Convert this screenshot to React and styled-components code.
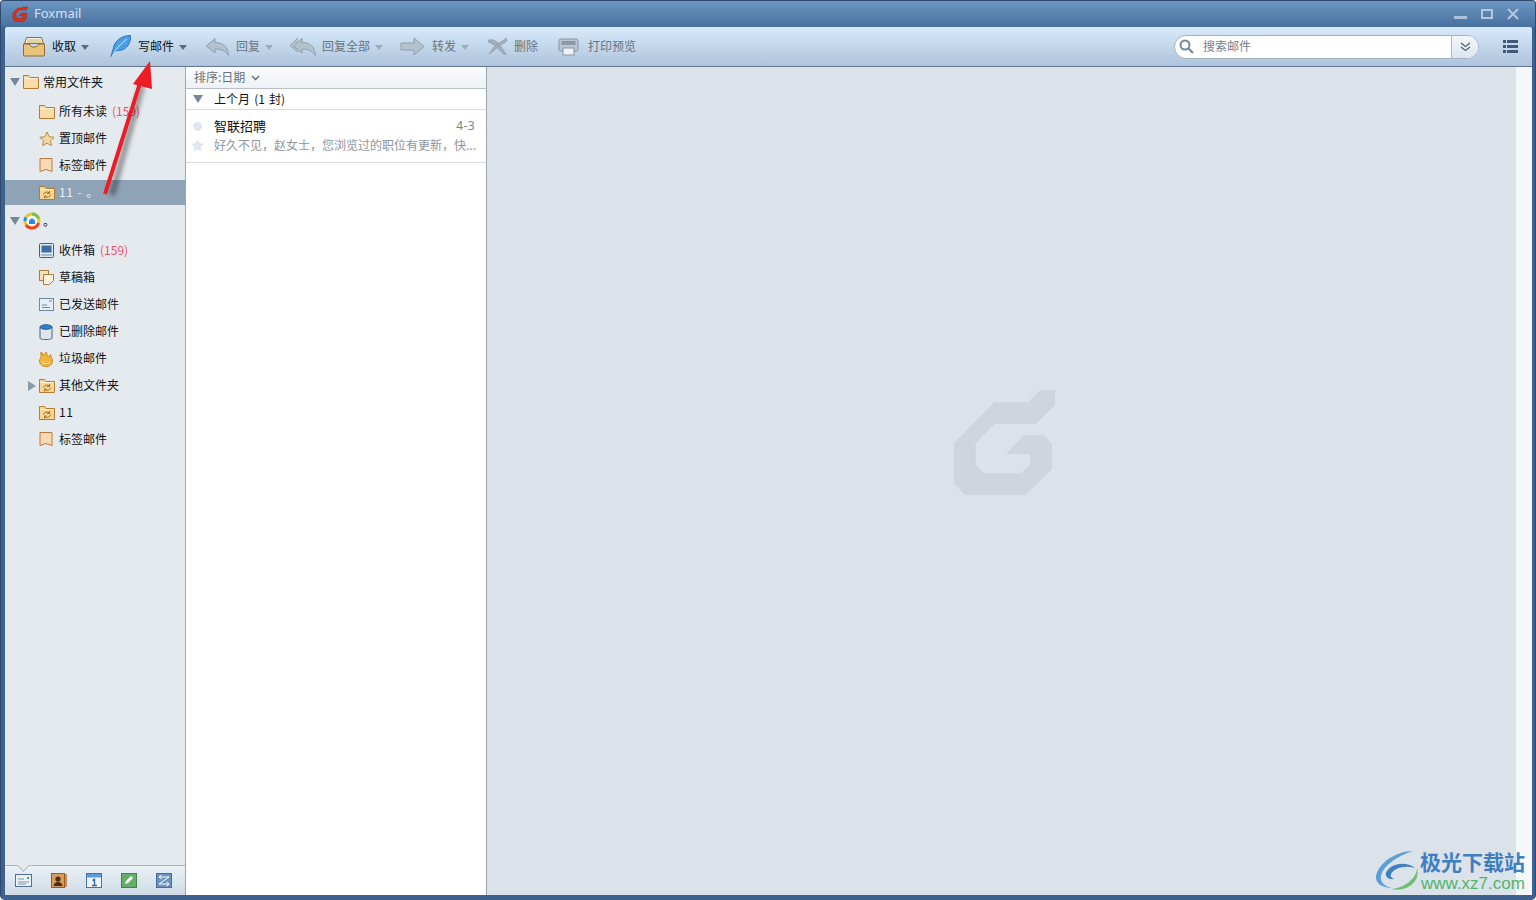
import React from "react";
import styled, { createGlobalStyle } from "styled-components";

const Global = createGlobalStyle`
  html, body { margin: 0; padding: 0; background: #fff; }
  body { font-family: "Noto Sans CJK SC", "Noto Sans", sans-serif; font-size: 12px; overflow: hidden; }
  * { box-sizing: border-box; }
`;

const Frame = styled.div`
  position: relative; width: 1536px; height: 900px;
  display: flex; flex-direction: column;
  background: #3d628f;
  border: 1px solid #2f4a6e; border-bottom: 0;
  border-radius: 4px 4px 5px 5px;
  padding: 0 3px 5px 3px; overflow: hidden;
`;
const TitleBar = styled.div`
  height: 26px; margin: 0 -3px; padding: 0 12px 0 11px; flex: none;
  display: flex; align-items: center;
  background: linear-gradient(#6c97c2, #48709e);
`;
const TitleText = styled.span`
  font: 13px "Noto Sans", sans-serif; color: #d5e2ef; margin-left: 5px; flex: 1; line-height: 1;
  margin-top: -2px;
`;
const WinControls = styled.div`display: flex; align-items: center; gap: 14px; margin-right: 4px;`;
const Toolbar = styled.div`
  height: 40px; flex: none; display: flex; align-items: center; padding: 0 0 0 17px; margin-left: 1px;
  background: linear-gradient(#d8eafb, #aec4dc);
  border-bottom: 1px solid #66788f; border-radius: 2px 2px 0 0;
`;
const ToolButton = styled.div`
  width: ${p => p.$w}px; display: flex; align-items: center; flex: none;
  color: ${p => p.$off ? "#68747f" : "#0f1216"};
`;
const IconSlot = styled.span`width: ${p => p.$w}px; flex: none; display: flex; align-items: center;`;
const Label = styled.span`
  margin-top: -2px; line-height: 18px; white-space: nowrap;
  letter-spacing: ${p => p.$ls || 0}px; word-spacing: ${p => p.$ws || 0}px;
`;
const HeadLabel = styled(Label)`margin-top: 0;`;
const Caret = styled.span`
  width: 0; height: 0; margin: 1px 0 0 5px; flex: none;
  border-left: 4px solid transparent; border-right: 4px solid transparent;
  border-top: 5px solid ${p => p.$off ? "#9dadbd" : "#5b6c80"};
`;
const Search = styled.div`
  margin-left: auto; width: 305px; height: 24px; display: flex; align-items: stretch; flex: none;
  border: 1px solid #a3b3c5; border-radius: 12px; background: #fff; overflow: hidden;
`;
const SearchInput = styled.div`
  flex: 1; display: flex; align-items: center; padding-left: 4px; gap: 9px; color: #76828e;
`;
const SearchDrop = styled.div`
  width: 27px; border-left: 1px solid #a9b7c7; display: flex; align-items: center; justify-content: center;
  background: linear-gradient(#f2f6fa, #dde6ef);
`;
const MenuBtn = styled.div`width: 53px; flex: none; display: flex; justify-content: flex-end; padding-right: 14px;`;

const Body = styled.div`flex: 1; min-height: 0; display: flex; margin-left: 1px;`;
const Sidebar = styled.div`
  width: 181px; flex: none; display: flex; flex-direction: column;
  background: #e5eaef; border-right: 1px solid #9ba6b1; color: #0f1216;
`;
const Tree = styled.div`flex: 1; padding-top: 2px;`;
const GroupRow = styled.div`
  height: 26px; display: flex; align-items: center; padding-left: 5px; margin-bottom: ${p => p.$mb || 0}px;
`;
const Row = styled.div`
  height: ${p => p.$sel ? 25 : 27}px; margin-bottom: ${p => p.$sel ? 3 : 0}px; margin-top: ${p => p.$sel ? 1 : 0}px;
  display: flex; align-items: center; padding-left: ${p => p.$arrow ? 23 : 34}px;
  background: ${p => p.$sel ? "#8fa3b6" : "transparent"}; color: ${p => p.$sel ? "#e6f0f8" : "inherit"};
`;
const IconBox = styled.span`width: ${p => p.$w || 20}px; flex: none; display: flex; align-items: center;`;
const Count = styled(Label)`color: #f0506a; margin-left: 5px;`;
const Tri = styled.span`
  width: 0; height: 0; flex: none; margin-right: ${p => p.$mr}px;
  ${p => p.$right
    ? `border-top: 5px solid transparent; border-bottom: 5px solid transparent; border-left: 8px solid #8a9bae;`
    : `border-left: 5px solid transparent; border-right: 5px solid transparent; border-top: 8px solid #75889b;`}
`;
const Dock = styled.div`
  position: relative; height: 30px; flex: none; display: flex; align-items: center; padding-left: 10px; gap: 19px;
  background: linear-gradient(#eaf1f7, #cfdce6);
  border-top: 1px solid #a9b6c2;
  &::before {
    content: ""; position: absolute; left: 14px; top: -5px; width: 8px; height: 8px; transform: rotate(45deg);
    background: #e5eaef; border-right: 1px solid #a9b6c2; border-bottom: 1px solid #a9b6c2;
  }
`;
const List = styled.div`
  width: 301px; flex: none; background: #fff; border-right: 1px solid #9ba6b1; display: flex; flex-direction: column;
`;
const SortBar = styled.div`
  height: 22px; flex: none; display: flex; align-items: center; gap: 6px; padding-left: 8px; color: #66717c;
  background: linear-gradient(#fbfcfd, #eef2f6); border-bottom: 1px solid #b7c0ca;
`;
const MonthRow = styled.div`
  height: 21px; flex: none; display: flex; align-items: center; padding-left: 7px; color: #0f1216;
  border-bottom: 1px solid #d8dcdf;
`;
const Message = styled.div`
  height: 53px; flex: none; display: grid; grid-template-columns: 28px 1fr auto; grid-template-rows: 19px 19px;
  align-content: center; align-items: center; padding: 0 11px 0 0; border-bottom: 1px solid #d8dcdf;
`;
const Dot = styled.span`width: 9px; height: 9px; border-radius: 50%; background: #dfe6ee; margin-left: 7px;`;
const StarCell = styled.span`margin-left: 5px; display: flex;`;
const Sender = styled(Label)`font-size: 13px; color: #0c0c0c;`;
const DateText = styled(Label)`font: 12px/18px "Noto Sans", sans-serif; color: #7d858d; letter-spacing: .4px;`;
const Preview = styled(Label)`grid-column: 2 / 4; color: #8d959d;`;
const Reading = styled.div`
  width: 1029px; flex: none; background: #dbe2e9; display: flex; align-items: center; justify-content: center;
  padding: 0 0 77px 7px;
`;
const RightStrip = styled.div`flex: 1; background: #f6f7f8;`;
const Overlay = styled.svg`position: absolute; left: 0; top: 0; pointer-events: none;`;
const Mark = styled.div`
  position: absolute; left: 1374px; top: 847px; display: flex; align-items: flex-start; pointer-events: none;
`;
const MarkText = styled.div`display: flex; flex-direction: column; margin-left: 1px;`;
const MarkCn = styled.span`font-size: 21px; font-weight: 700; line-height: 27px; color: #3f7fc0;`;
const MarkEn = styled.span`font: 17px/17px "Liberation Sans", sans-serif; color: #4fb56d; margin-left: 1px; white-space: nowrap;`;

const Folder = ({ c = "#fbdca6", s = "#b27a34", sync }) => (
  <svg width="16" height="14" viewBox="0 0 16 14">
    <path d="M.5 2.500v-2h5l1.500 2h8.500v11H.5z" fill={sync ? "#f8d795" : c} stroke={s} />
    <path d="M1.500 3.500h13" stroke="#fff3d8" />
    {sync && <path d="M4.500 8.500a3.500 3 0 0 1 6-1.500M11.500 8.500a3.500 3 0 0 1-6 2M10.500 5v2.500H8M5.500 12.500V10H8" fill="none" stroke="#a8702c" />}
  </svg>
);
const Star = ({ f = "#f6d9a2", s = "#b48a4c", size = 16 }) => (
  <svg width={size} height={size} viewBox="0 0 16 16"><path d="M8 1l2.100 4.700 5.100.6-3.800 3.400 1.100 5L8 12.200l-4.500 2.500 1.100-5L.8 6.300l5.100-.6z" fill={f} stroke={s} /></svg>
);
const Tag = () => (
  <svg width="14" height="15" viewBox="0 0 14 15"><path d="M1 .5h12v13l-6-2-6 2z" fill="#f8d9b5" stroke="#bd7a3e" /></svg>
);
const Inbox = () => (
  <svg width="15" height="15" viewBox="0 0 15 15"><rect x=".5" y=".5" width="14" height="14" rx="1" fill="#dfe9f3" stroke="#3c6089" /><rect x="2.500" y="2.500" width="10" height="7" fill="#3f6da0" /><path d="M2 12h11" stroke="#6d8db0" /></svg>
);
const Draft = () => (
  <svg width="15" height="15" viewBox="0 0 15 15"><rect x=".5" y=".5" width="9" height="10" fill="#f6dfbd" stroke="#a97b45" /><path d="M4.500 4.500h10v6l-4 4h-6z" fill="#fdf3dd" stroke="#a97b45" /></svg>
);
const Sent = () => (
  <svg width="15" height="13" viewBox="0 0 15 13"><rect x=".5" y=".5" width="14" height="12" fill="#e6edf4" stroke="#6e88a3" /><path d="M3 7h5M3 9.500h8M10 3h3" stroke="#6e88a3" /></svg>
);
const Trash = () => (
  <svg width="14" height="16" viewBox="0 0 14 16"><path d="M1 3v11c0 1 2 1.500 6 1.500s6-.5 6-1.500V3z" fill="#dfe6ed" stroke="#495f78" /><ellipse cx="7" cy="3" rx="6" ry="2.300" fill="#2f7fd0" stroke="#2d5c8f" /></svg>
);
const Flame = () => (
  <svg width="14" height="16" viewBox="0 0 14 16"><path d="M2 1c2 1 1.500 3 2.500 4C5 3.500 6 2.500 7.500 1 7 3.500 9 4.500 9.500 6c.5-1 1-1.500 2-2.500 0 2 2 4 2 6.500 0 3.500-3 5.500-6.500 5.500S.5 13.500.5 10c0-2 1.500-3 1.500-4.500C2 4 1.500 2.500 2 1z" fill="#f2b43c" stroke="#d08a22" /><path d="M3 11c1 2 7 2 8 0" fill="none" stroke="#fff0b0" /></svg>
);
const QQ = () => (
  <svg width="18" height="18" viewBox="0 0 18 18">
    <circle cx="9" cy="9" r="7" fill="#fff" stroke="#f2c230" strokeWidth="3" />
    <path d="M9 2a7 7 0 0 1 6.500 4.500" fill="none" stroke="#7cc04a" strokeWidth="3" />
    <path d="M15.500 11A7 7 0 0 1 3 13" fill="none" stroke="#e8432c" strokeWidth="3" />
    <path d="M2 9a7 7 0 0 1 1-3.500" fill="none" stroke="#2c8be0" strokeWidth="3" />
    <path d="M6 12V8.500L9 6l3 2.500V12z" fill="#2c8be0" />
  </svg>
);

const TbTray = () => (
  <svg width="24" height="21" viewBox="0 0 24 21">
    <path d="M4.500 1.500h15l2 6h-19z" fill="#fff6e0" stroke="#8c6a32" />
    <path d="M5 4h14M4.500 6h15" stroke="#c8ab72" />
    <path d="M1.500 8h6c.5 2 1.500 3 4.500 3s4-1 4.500-3h6v11c0 .6-.4 1-1 1h-19c-.6 0-1-.4-1-1z" fill="#e8c379" stroke="#8c6a32" />
  </svg>
);
const TbFeather = () => (
  <svg width="22" height="23" viewBox="0 0 22 23">
    <path d="M1 22c.5-3 1.200-5 2-7 .5-5 3-9 7-11.500C13 1.500 17 .5 20.500.5c.5 4-1 8-3 10.500-3 3.500-6 4.500-9 4.500-2 0-3.500.5-4.500 1.500z" fill="#4aa0e8" stroke="#2a6fb5" />
    <path d="M1.500 22C5 15 10 9 17 4" stroke="#bfe2ff" fill="none" />
  </svg>
);
const TbReply = ({ dbl }) => (
  <svg width={dbl ? 28 : 25} height="20" viewBox={dbl ? "0 0 28 20" : "0 0 25 20"}>
    {dbl && <path d="M9 1 1 8.500 9 15" fill="#b9c5d1" stroke="#8f9daa" />}
    <g transform={dbl ? "translate(3,0)" : ""}>
      <path d="M10 1.500 1.500 9l8.500 7v-4c6 0 10 1.500 13.500 6.500C23 10 18 5.500 10 5.500z" fill="#b4c1ce" stroke="#8f9daa" />
    </g>
  </svg>
);
const TbForward = () => (
  <svg width="25" height="20" viewBox="0 0 25 20"><path d="M14 1l10 8.500L14 18v-5H1V6h13z" fill="#b4c1ce" stroke="#8f9daa" /></svg>
);
const TbDelete = () => (
  <svg width="21" height="19" viewBox="0 0 21 19">
    <path d="M.5 3C5 2 9 4 12 8l6.500 9.500-3-.5C12 14 8 8 .5 5z" fill="#a3afbb" stroke="#8995a2" strokeWidth=".6" />
    <path d="M18 1l1 3c-4 3-7 4-9 6-3 3-6 5-9 7 2-4 5-7 8-10 3-2 6-3 9-6z" fill="#a3afbb" stroke="#8995a2" strokeWidth=".6" />
  </svg>
);
const TbPrint = () => (
  <svg width="21" height="18" viewBox="0 0 21 18">
    <rect x="1" y="1" width="19" height="12" rx="1.500" fill="#b9c5d1" stroke="#8995a2" />
    <rect x="3.500" y="3" width="14" height="4" fill="#8b98a6" />
    <rect x="5" y="10" width="11" height="7" fill="#eef2f6" stroke="#8995a2" />
  </svg>
);

const DockMail = () => (
  <svg width="17" height="13" viewBox="0 0 17 13"><rect x=".5" y=".5" width="16" height="12" fill="#eaf0f6" stroke="#55708e" /><path d="M3 5h6M3 8h11M3 10h8" stroke="#7f97b0" /><rect x="12" y="3" width="2" height="2" fill="#3fa888" /></svg>
);
const DockContact = () => (
  <svg width="16" height="15" viewBox="0 0 16 15"><rect x=".5" y=".5" width="13" height="14" fill="#d99a5e" stroke="#925f2b" /><rect x="14" y="1" width="2" height="13" fill="#c98a4e" /><circle cx="7" cy="6" r="2.600" fill="#4a2d14" /><path d="M2.500 13c.5-3 2-4 4.500-4s4 1 4.500 4z" fill="#4a2d14" /></svg>
);
const DockCal = () => (
  <svg width="16" height="15" viewBox="0 0 16 15"><rect x=".5" y=".5" width="15" height="14" fill="#f2f6fa" stroke="#3f76ad" /><rect x="1" y="1" width="14" height="3.500" fill="#5a9ade" /><path d="M6.500 7.500 8.500 6.500v6M6 12.500h5" stroke="#2f66a0" strokeWidth="1.400" fill="none" /></svg>
);
const DockNote = () => (
  <svg width="16" height="15" viewBox="0 0 16 15"><rect x=".5" y=".5" width="15" height="14" fill="#66ad6c" stroke="#3f8547" /><path d="M4 11l1-3 5-5 2 2-5 5z" fill="#fff" /></svg>
);
const DockSync = () => (
  <svg width="16" height="15" viewBox="0 0 16 15"><rect x=".5" y=".5" width="15" height="14" fill="#6e93c0" stroke="#44699a" /><path d="M3 4h10L3 11h10M5.500 2 3 4l2.500 2M10.500 9 13 11l-2.500 2" stroke="#fff" fill="none" /></svg>
);

const tools = [
  { w: 88, s: 30, icon: <TbTray />, t: "收取", caret: true },
  { w: 95, s: 28, icon: <TbFeather />, t: "写邮件", caret: true },
  { w: 84, s: 31, icon: <TbReply />, t: "回复", caret: true, off: true },
  { w: 111, s: 33, icon: <TbReply dbl />, t: "回复全部", caret: true, off: true },
  { w: 88, s: 32, icon: <TbForward />, t: "转发", caret: true, off: true },
  { w: 70, s: 26, icon: <TbDelete />, t: "删除", off: true },
  { w: 78, s: 30, icon: <TbPrint />, t: "打印预览", off: true },
];

export default function App() {
  return (
    <>
      <Global />
      <Frame>
        <TitleBar>
          <svg width="17" height="16" viewBox="0 0 17 16">
            <path d="M11 1h5l-2 3H7.500L4 7.500V11l1.500 1.500h4L11 11V9.500H7L9.500 7h5v5l-3 3.500H3L1 13V6.500L6 2h4z" fill="#d7301f" stroke="#a82012" strokeWidth=".5" />
          </svg>
          <TitleText>Foxmail</TitleText>
          <WinControls>
            <svg width="13" height="10" viewBox="0 0 13 10"><rect y="7" width="13" height="3" fill="#aac2dc" /></svg>
            <svg width="12" height="10" viewBox="0 0 12 10"><rect x="1" y="1" width="10" height="8" fill="none" stroke="#b3c8df" strokeWidth="2" /></svg>
            <svg width="12" height="12" viewBox="0 0 12 12"><path d="M1 1l10 10M11 1 1 11" stroke="#b3c8df" strokeWidth="2" /></svg>
          </WinControls>
        </TitleBar>
        <Toolbar>
          {tools.map(t => (
            <ToolButton key={t.t} $w={t.w} $off={t.off}>
              <IconSlot $w={t.s}>{t.icon}</IconSlot>
              <Label>{t.t}</Label>
              {t.caret && <Caret $off={t.off} />}
            </ToolButton>
          ))}
          <Search>
            <SearchInput>
              <svg width="15" height="15" viewBox="0 0 15 15"><circle cx="6" cy="6" r="4.500" fill="none" stroke="#73889c" strokeWidth="2" /><path d="M9.500 9.500 14 14" stroke="#73889c" strokeWidth="2.200" /></svg>
              <Label>搜索邮件</Label>
            </SearchInput>
            <SearchDrop>
              <svg width="11" height="10" viewBox="0 0 11 10"><path d="M1 1l4.500 3.500L10 1M1 5l4.500 3.500L10 5" fill="none" stroke="#4d6278" strokeWidth="1.300" /></svg>
            </SearchDrop>
          </Search>
          <MenuBtn>
            <svg width="15" height="13" viewBox="0 0 15 13"><path d="M0 0h3v3H0zM4 0h11v3H4zM0 5h3v3H0zM4 5h11v3H4zM0 10h3v3H0zM4 10h11v3H4z" fill="#3e5b7a" /></svg>
          </MenuBtn>
        </Toolbar>
        <Body>
          <Sidebar>
            <Tree>
              <GroupRow $mb={3}><Tri $mr={3} /><IconBox><Folder /></IconBox><HeadLabel>常用文件夹</HeadLabel></GroupRow>
              <Row><IconBox><Folder /></IconBox><Label>所有未读</Label><Count>(159)</Count></Row>
              <Row><IconBox><Star /></IconBox><Label>置顶邮件</Label></Row>
              <Row><IconBox><Tag /></IconBox><Label>标签邮件</Label></Row>
              <Row $sel><IconBox><Folder sync /></IconBox><Label $ls={0.5} $ws={1}>11 - 。</Label></Row>
              <GroupRow $mb={3}><Tri $mr={3} /><IconBox><QQ /></IconBox><HeadLabel>。</HeadLabel></GroupRow>
              <Row><IconBox><Inbox /></IconBox><Label>收件箱</Label><Count>(159)</Count></Row>
              <Row><IconBox><Draft /></IconBox><Label>草稿箱</Label></Row>
              <Row><IconBox><Sent /></IconBox><Label>已发送邮件</Label></Row>
              <Row><IconBox><Trash /></IconBox><Label>已删除邮件</Label></Row>
              <Row><IconBox><Flame /></IconBox><Label>垃圾邮件</Label></Row>
              <Row $arrow><Tri $right $mr={3} /><IconBox><Folder sync /></IconBox><Label>其他文件夹</Label></Row>
              <Row><IconBox><Folder sync /></IconBox><Label $ls={0.5}>11</Label></Row>
              <Row><IconBox><Tag /></IconBox><Label>标签邮件</Label></Row>
            </Tree>
            <Dock>
              <DockMail /><DockContact /><DockCal /><DockNote /><DockSync />
            </Dock>
          </Sidebar>
          <List>
            <SortBar>
              <Label>排序:日期</Label>
              <svg width="9" height="6" viewBox="0 0 9 6"><path d="M1 1l3.500 3.500L8 1" fill="none" stroke="#5c6874" strokeWidth="1.300" /></svg>
            </SortBar>
            <MonthRow><Tri $mr={11} /><HeadLabel $ws={1.5}>上个月 (1 封)</HeadLabel></MonthRow>
            <Message>
              <Dot />
              <Sender>智联招聘</Sender>
              <DateText>4-3</DateText>
              <StarCell><Star f="#dfe6ee" s="#dfe6ee" size={13} /></StarCell>
              <Preview>好久不见，赵女士，您浏览过的职位有更新，快...</Preview>
            </Message>
          </List>
          <Reading>
            <svg width="150" height="135" viewBox="0 0 450 405">
              <path d="M330 45h45v45l-57 57H193l-56 58v63l25 27h111l27-27v-31h-72l54-57h58l26 25v77l-79 78H105l-33-35V205L193 82h103z" fill="#ced5de" />
            </svg>
          </Reading>
          <RightStrip />
        </Body>
        <Overlay width="1536" height="900" viewBox="0 0 1536 900">
          <defs>
            <filter id="sh" x="-50%" y="-20%" width="200%" height="140%"><feGaussianBlur stdDeviation="2.500" /></filter>
          </defs>
          <path d="M107 193 137 84" stroke="#000" strokeOpacity=".45" strokeWidth="5" filter="url(#sh)" transform="translate(4,1)" />
          <path d="M104 193 139 82" stroke="#ee1c25" strokeWidth="4" />
          <path d="M149 60 132 83 151 88z" fill="#ee1c25" />
        </Overlay>
        <Mark>
          <svg width="44" height="44" viewBox="0 0 44 44">
            <path d="M38 3C22 3 4 14 1 28c-1 7 6 12 16 12-8-2-12-6-11-12C8 18 22 8 38 3z" fill="#5a9fd8" />
            <path d="M40 20C30 12 14 16 11 25c-1 4 3 7 8 6-3-1-4-3-3-5 3-6 14-9 24-6z" fill="#3f7fc0" />
            <path d="M42 20c0 10-12 20-26 21 8 2 18 0 24-8 3-4 3-9 2-13z" fill="#6cc070" />
          </svg>
          <MarkText>
            <MarkCn>极光下载站</MarkCn>
            <MarkEn>www.xz7.com</MarkEn>
          </MarkText>
        </Mark>
      </Frame>
    </>
  );
}
